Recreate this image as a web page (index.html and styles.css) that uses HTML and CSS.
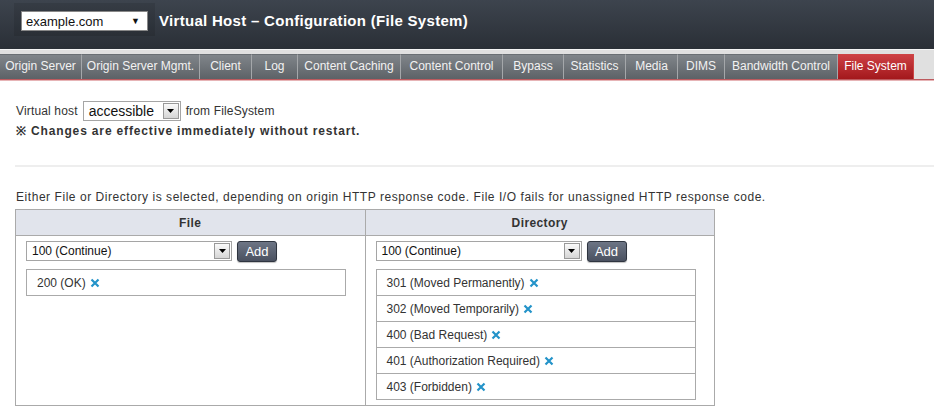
FILE: index.html
```html
<!DOCTYPE html>
<html>
<head>
<meta charset="utf-8">
<link rel="stylesheet" href="styles.css">
</head>
<body>
<header class="header">
  <div class="host-box">
    <div class="host-select"><span>example.com</span><span class="tri">▼</span></div>
  </div>
  <h1 class="title">Virtual Host – Configuration (File System)</h1>
</header>
<div class="tabbar">
  <nav class="tabs">
    <a class="tab">Origin Server</a>
    <a class="tab">Origin Server Mgmt.</a>
    <a class="tab">Client</a>
    <a class="tab">Log</a>
    <a class="tab">Content Caching</a>
    <a class="tab">Content Control</a>
    <a class="tab">Bypass</a>
    <a class="tab">Statistics</a>
    <a class="tab">Media</a>
    <a class="tab">DIMS</a>
    <a class="tab">Bandwidth Control</a>
    <a class="tab tab-active">File System</a>
  </nav>
</div>
<main class="content">
  <div class="vh-row">
    <span>Virtual host</span>
    <div class="sel sel-vh"><span class="sel-text">accessible</span><span class="sel-btn"><svg width="7" height="4" viewBox="0 0 7 4"><path d="M0 0h7L3.5 4z" fill="#000"/></svg></span></div>
    <span>from FileSystem</span>
  </div>
  <p class="notice">※ Changes are effective immediately without restart.</p>
  <hr class="sep">
  <p class="desc">Either File or Directory is selected, depending on origin HTTP response code. File I/O fails for unassigned HTTP response code.</p>
  <table class="cfg">
    <thead>
      <tr><th>File</th><th>Directory</th></tr>
    </thead>
    <tbody>
      <tr>
        <td>
          <div class="add-row">
            <div class="sel sel-code"><span class="sel-text">100 (Continue)</span><span class="sel-btn"><svg width="7" height="4" viewBox="0 0 7 4"><path d="M0 0h7L3.5 4z" fill="#000"/></svg></span></div>
            <button class="btn-add">Add</button>
          </div>
          <ul class="code-list">
            <li class="code-item">200 (OK) <svg class="del" width="10" height="10" viewBox="0 0 10 10"><path d="M1.5 1.5l7 7M8.5 1.5l-7 7" stroke="#2393c9" stroke-width="2.2"/></svg></li>
          </ul>
        </td>
        <td>
          <div class="add-row">
            <div class="sel sel-code"><span class="sel-text">100 (Continue)</span><span class="sel-btn"><svg width="7" height="4" viewBox="0 0 7 4"><path d="M0 0h7L3.5 4z" fill="#000"/></svg></span></div>
            <button class="btn-add">Add</button>
          </div>
          <ul class="code-list">
            <li class="code-item">301 (Moved Permanently) <svg class="del" width="10" height="10" viewBox="0 0 10 10"><path d="M1.5 1.5l7 7M8.5 1.5l-7 7" stroke="#2393c9" stroke-width="2.2"/></svg></li>
            <li class="code-item">302 (Moved Temporarily) <svg class="del" width="10" height="10" viewBox="0 0 10 10"><path d="M1.5 1.5l7 7M8.5 1.5l-7 7" stroke="#2393c9" stroke-width="2.2"/></svg></li>
            <li class="code-item">400 (Bad Request) <svg class="del" width="10" height="10" viewBox="0 0 10 10"><path d="M1.5 1.5l7 7M8.5 1.5l-7 7" stroke="#2393c9" stroke-width="2.2"/></svg></li>
            <li class="code-item">401 (Authorization Required) <svg class="del" width="10" height="10" viewBox="0 0 10 10"><path d="M1.5 1.5l7 7M8.5 1.5l-7 7" stroke="#2393c9" stroke-width="2.2"/></svg></li>
            <li class="code-item">403 (Forbidden) <svg class="del" width="10" height="10" viewBox="0 0 10 10"><path d="M1.5 1.5l7 7M8.5 1.5l-7 7" stroke="#2393c9" stroke-width="2.2"/></svg></li>
          </ul>
        </td>
      </tr>
    </tbody>
  </table>
</main>
</body>
</html>
```
FILE: styles.css
```css
* { box-sizing: border-box; }
body {
  margin: 0;
  font: 12px "Liberation Sans", Arial, sans-serif;
  color: #333;
  background: #fff;
}
.header {
  height: 49px;
  background: linear-gradient(#3d444e, #2a2f36);
  display: flex;
  align-items: flex-start;
  padding-top: 3px;
}
.host-box {
  margin-left: 14px;
  padding: 8px 7px 5px;
  background: rgba(0, 0, 0, 0.1);
}
.host-select {
  width: 127px;
  height: 20px;
  background: #fff;
  border: 1px solid #888;
  display: flex;
  align-items: center;
  justify-content: space-between;
  padding: 0 7px 0 4px;
  font-size: 13px;
  color: #111;
}
.tri { font-size: 9px; }
.title {
  margin: 8px 0 0 4px;
  font-size: 15px;
  line-height: 20px;
  font-weight: bold;
  letter-spacing: 0.3px;
  color: #fff;
}
.tabbar {
  background: #e0e0e0;
  border-top: 1px solid #f4f4f4;
  padding-top: 4px;
  border-bottom: 1px solid #bd5a5e;
  box-shadow: 0 1px 0 #e6b4b6;
}
.tabs {
  display: grid;
  grid-template-columns: 82px 118px 52px 46px 103px 102px 61px 62px 52px 47px 113px 76px;
  height: 25px;
}
.tab {
  display: block;
  background: linear-gradient(#80858a, #5d6267);
  border-top: 1px solid #6a6f74;
  border-right: 1px solid #a4a7aa;
  color: #f2f2f2;
  text-align: center;
  line-height: 23px;
  white-space: nowrap;
}
.tab-active {
  background: linear-gradient(#cd4044, #a3181c);
  border-color: #c44;
  color: #fff;
}
.content {
  padding: 21px 0 0 15px;
}
.vh-row {
  display: flex;
  align-items: center;
  gap: 5px;
  height: 20px;
  padding-left: 1px;
}
.vh-row > span { letter-spacing: 0.15px; }
.sel {
  display: flex;
  align-items: center;
  background: #fff;
  border: 1px solid #a5a5a5;
  height: 20px;
}
.sel-text { flex: 1; padding-left: 5px; color: #111; }
.sel-vh { width: 98px; }
.sel-vh .sel-text { font-size: 14px; }
.sel-btn {
  width: 16px;
  height: 16px;
  margin-right: 1px;
  border: 1px solid #999;
  background: linear-gradient(#fafafa, #d5d5d5);
  display: flex;
  align-items: center;
  justify-content: center;
}
.notice {
  margin: 2px 0 0 1px;
  font-weight: bold;
  line-height: 16px;
  letter-spacing: 0.85px;
}
.sep {
  margin: 26px 0 0;
  border: 0;
  border-top: 2px solid #eee;
}
.desc {
  margin: 22px 0 4px 1px;
  line-height: 16px;
  letter-spacing: 0.55px;
}
.cfg {
  width: 700px;
  table-layout: fixed;
  border-collapse: collapse;
  border: 1px solid #aaa;
}
.cfg th {
  height: 26px;
  background: #e1e4ec;
  border: 1px solid #aaa;
  font-weight: bold;
  letter-spacing: 0.4px;
  color: #333;
  padding: 0;
}
.cfg td {
  border: 1px solid #aaa;
  vertical-align: top;
  padding: 5px 10px 5px 10px;
}
.add-row {
  display: flex;
  gap: 5px;
}
.sel-code { width: 206px; }
.sel-code .sel-text { font-size: 12px; }
.btn-add {
  width: 40px;
  height: 21px;
  padding: 0;
  border: 1px solid #2f3540;
  border-radius: 3px;
  background: linear-gradient(#6d7585, #4a5160);
  color: #fff;
  font: 13px "Liberation Sans", Arial, sans-serif;
  box-shadow: 0 1px 1px rgba(0,0,0,0.25);
}
.code-list {
  list-style: none;
  margin: 7px 0 0;
  padding: 0;
  width: 320px;
  border: 1px solid #aaa;
}
.code-item {
  height: 26px;
  padding-left: 10px;
  border-bottom: 1px solid #aaa;
  display: flex;
  align-items: center;
  gap: 4px;
}
.code-item:last-child {
  height: 25px;
  border-bottom: 0;
}
.del { display: block; }
```
